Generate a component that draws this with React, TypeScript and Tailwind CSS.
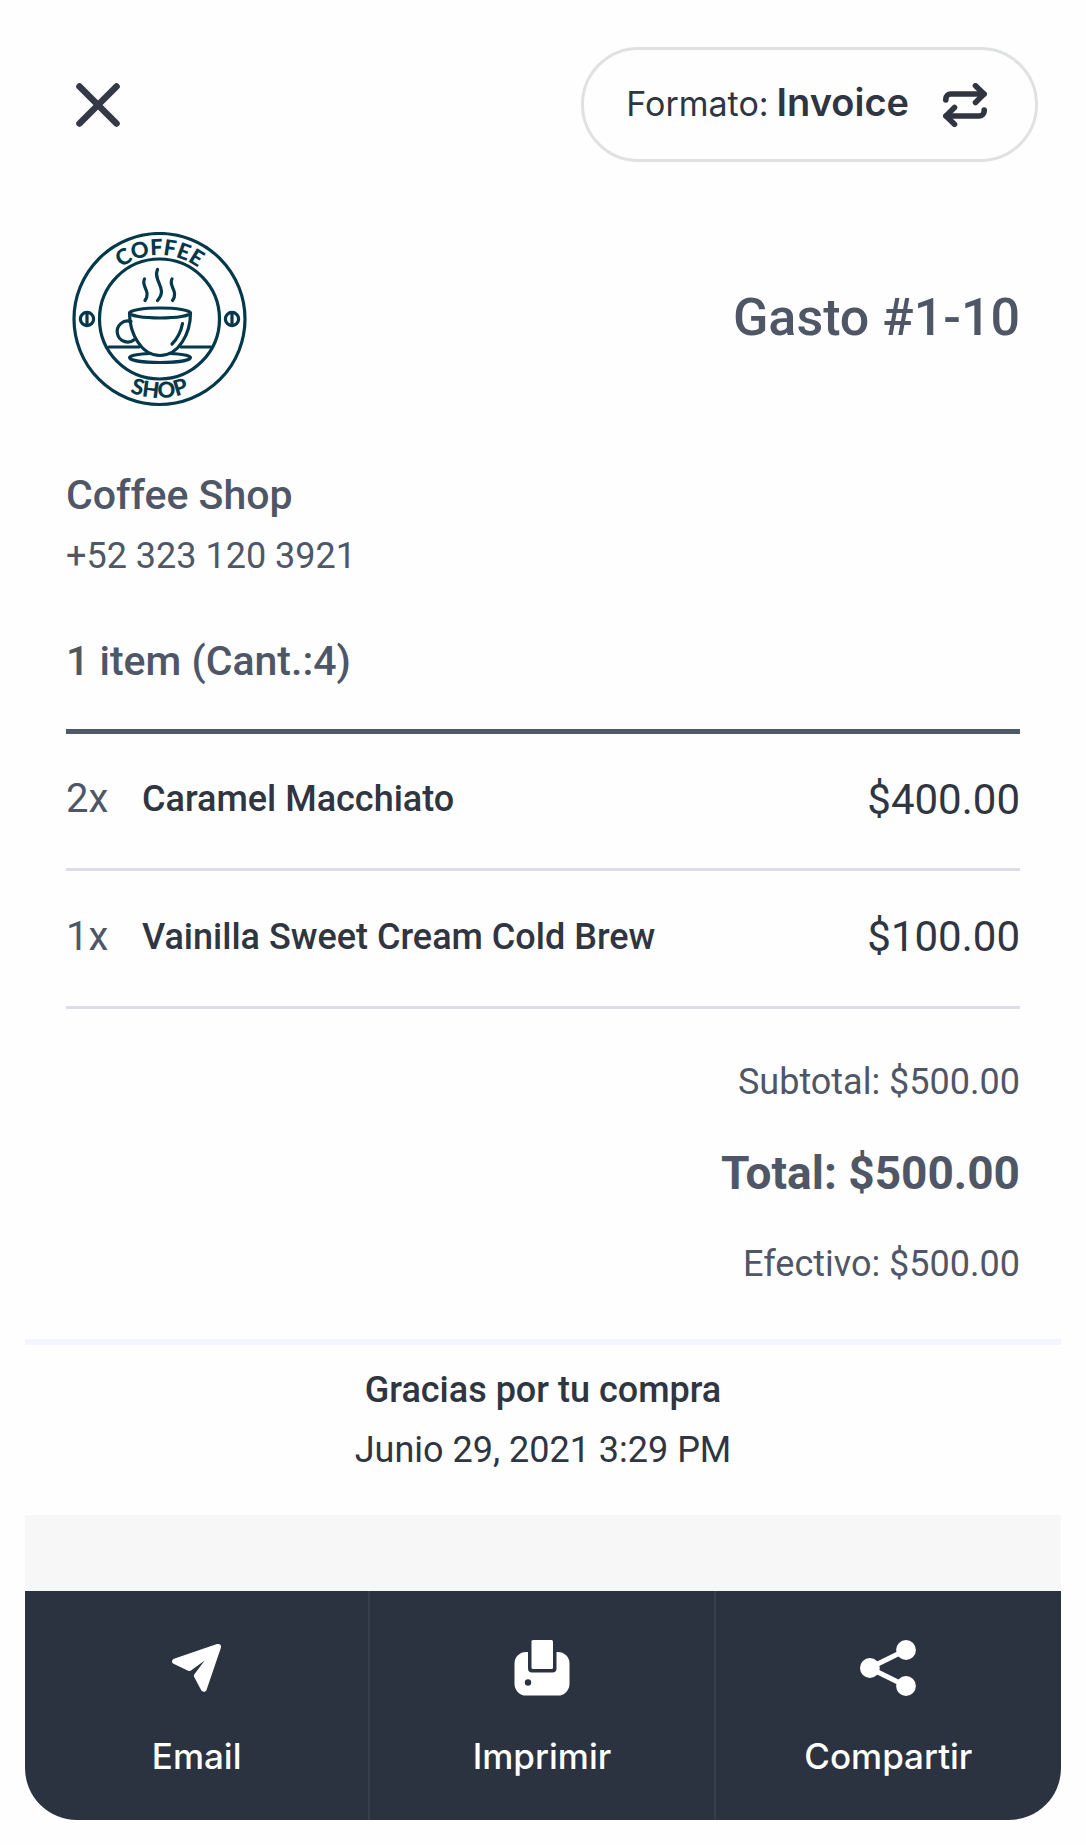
import type { ReactNode } from "react";

const items = [
  { qty: 2, name: "Caramel Macchiato", price: "$400.00" },
  { qty: 1, name: "Vainilla Sweet Cream Cold Brew", price: "$100.00" },
];

function CloseIcon() {
  return (
    <svg
      viewBox="0 0 44 44"
      className="w-11 h-11"
      fill="none"
      stroke="currentColor"
      strokeWidth="6.600"
      strokeLinecap="round"
      aria-hidden="true"
    >
      <path d="M3.500 3.500 40.500 40.500M40.500 3.500 3.500 40.500" />
    </svg>
  );
}

function SwapIcon() {
  return (
    <svg
      viewBox="0 0 44 44"
      className="w-11 h-11 shrink-0"
      fill="none"
      stroke="currentColor"
      strokeWidth="5.600"
      strokeLinecap="round"
      strokeLinejoin="round"
      aria-hidden="true"
    >
      <path d="M2.800 17V16a5 5 0 0 1 5-5H41" />
      <path d="m32.500 2.800 8.500 8.200-8.500 8.500" />
      <path d="M41.200 27V28a5 5 0 0 1-5 5H3" />
      <path d="m11.500 24.500-8.500 8.500 8.500 8.200" />
    </svg>
  );
}

function SendIcon() {
  return (
    <svg viewBox="0 0 56 56" className="w-14 h-14" fill="currentColor" aria-hidden="true">
      <path d="M5 18.800 48 4.100c2.700-.8 4.700 1 3.900 3.600L37.600 49.800c-.9 2.600-4.300 2.700-5.500.3L25.200 37c-.5-1-.4-1.900.2-2.700L35.700 20.600 22 30.400c-.9.7-1.900.8-2.900.3L4.500 23.800c-2-1-1.900-4.200.5-5Z" />
    </svg>
  );
}

function PrinterIcon() {
  return (
    <svg viewBox="0 0 56 56" className="w-14 h-14" fill="currentColor" aria-hidden="true">
      <path d="M12 12h2v16.500a4 4 0 0 0 4 4h20.500a4 4 0 0 0 4-4V12H44a11.500 11.500 0 0 1 11.500 11.500V44A11.500 11.500 0 0 1 44 55.500H12A11.500 11.500 0 0 1 .5 44V23.500A11.500 11.500 0 0 1 12 12Z" />
      <rect x="17.500" y="0" width="21.500" height="29" rx="1.500" />
      <circle cx="14" cy="42.500" r="3.200" fill="#2c3340" />
    </svg>
  );
}

function ShareIcon() {
  return (
    <svg viewBox="0 0 56 56" className="w-14 h-14" fill="currentColor" aria-hidden="true">
      <path d="M46 10 9.500 28 46 46" fill="none" stroke="currentColor" strokeWidth="5" />
      <circle cx="46" cy="10" r="9.900" />
      <circle cx="9.900" cy="28" r="9.900" />
      <circle cx="46" cy="46" r="9.900" />
    </svg>
  );
}

function Logo() {
  return (
    <svg
      viewBox="12 12 176 176"
      className="w-44 h-44"
      fill="none"
      stroke="#04384a"
      strokeWidth="3.200"
      strokeLinecap="round"
      role="img"
      aria-label="Coffee Shop"
    >
      <circle cx="99.500" cy="99" r="85.500" />
      <circle cx="99.500" cy="99" r="60" />

      {/* Beans */}
      <circle cx="27" cy="99" r="6.600" />
      <path d="M27 93v12" />
      <circle cx="172" cy="99" r="6.600" />
      <path d="M172 93v12" />

      {/* Steam */}
      <path d="M84.500 59c-4 7 7 12 .5 21.500" />
      <path d="M97.500 49.500c-5 11 11 19 0 31" />
      <path d="M112 59c-4 7 7 12 .5 21.500" />

      {/* Cup */}
      <ellipse cx="100" cy="93" rx="30.500" ry="5" />
      <path d="M69.500 93c0 20 11.500 42.500 30.500 42.500S130.500 113 130.500 93" />
      <path d="M71 101.500a10.500 10.500 0 1 0 3.500 18" />
      <path d="M122.500 103.500c-1.500 8-5 15-10.500 20.500" />

      {/* Table and plate */}
      <path d="M49 127h30M121 127h30" />
      <path d="M90 133.500c-12 .5-20.500 2-20.500 4 0 3 13.500 5 30.500 5s30.500-2 30.500-5c0-2-8.500-3.500-20.500-4" />

      <path id="logo-top" d="M35.500 99a64 64 0 0 1 128 0" stroke="none" />
      <path id="logo-bottom" d="M20.500 99a79 79 0 0 0 158 0" stroke="none" />
      <g fill="#04384a" stroke="none" textAnchor="middle" className="font-[Lato,sans-serif] font-black text-[22px]">
        <text>
          <textPath href="#logo-top" startOffset="50%">COFFEE</textPath>
        </text>
        <text>
          <textPath href="#logo-bottom" startOffset="50%">SHOP</textPath>
        </text>
      </g>
    </svg>
  );
}

function ActionButton({ icon, label }: { icon: ReactNode; label: string }) {
  return (
    <button
      type="button"
      className="flex flex-col items-center gap-[38px] pt-[49px] pb-[42px] font-[Inter,sans-serif] font-medium text-[35px] leading-[44px]"
    >
      {icon}
      <span>{label}</span>
    </button>
  );
}

export default function App() {
  return (
    <div className="bg-[#fefefe] font-[Roboto,sans-serif] text-[#2f3541] pt-[47px] pb-[26px]">
      {/* Header */}
      <header className="flex items-center justify-between pl-[76px] pr-12">
        <button type="button" aria-label="Cerrar" className="text-[#353846]">
          <CloseIcon />
        </button>
        <button
          type="button"
          className="flex items-center gap-[34px] h-[115px] pl-[42px] pr-12 rounded-full border-[3px] border-[#dfe1e3] font-[Inter,sans-serif]"
        >
          <span className="flex items-baseline gap-2 pb-1 leading-[48px]">
            <span className="text-[34px]">Formato:</span>
            <span className="text-[38px] font-semibold">Invoice</span>
          </span>
          <SwapIcon />
        </button>
      </header>

      <main className="mx-[25px]">
        <section className="px-[41px] pt-[70px] text-[#4f5767]">
          <div className="flex items-center justify-between pl-[6px]">
            <Logo />
            <h1 className="pb-1 text-[52px] leading-[64px] font-medium">Gasto #1-10</h1>
          </div>

          <h2 className="mt-[61px] text-[41px] leading-[52px] font-medium">Coffee Shop</h2>
          <p className="mt-[11px] text-[36px] leading-[48px]">+52 323 120 3921</p>
          <h2 className="mt-[55px] text-[41px] leading-[52px] font-medium">1 item (Cant.:4)</h2>

          {/* Items */}
          <table className="mt-[42px] w-full border-t-[5px] border-[#4f5a68]">
            <tbody>
              {items.map((item) => (
                <tr key={item.name} className="h-[138px] border-b-[3px] border-[#dcdde6]">
                  <td className="w-[76px] pb-1 text-[40px]">{item.qty}x</td>
                  <td className="pb-1 text-[36px] font-medium text-[#2f3541]">{item.name}</td>
                  <td className="pb-1 text-right text-[42px] text-[#2f3541]">{item.price}</td>
                </tr>
              ))}
            </tbody>
          </table>

          {/* Totals */}
          <div className="flex flex-col items-end gap-[39px] pt-[49px] pb-[51px] text-[36px] leading-[48px]">
            <p>Subtotal: $500.00</p>
            <p className="text-[46px] leading-[56px] font-bold">Total: $500.00</p>
            <p>Efectivo: $500.00</p>
          </div>
        </section>

        <section className="border-t-[6px] border-[#f5f6fd] pt-[21px] pb-[41px] text-center text-[36px] leading-[48px]">
          <p className="font-medium">Gracias por tu compra</p>
          <p className="mt-3">Junio 29, 2021 3:29 PM</p>
        </section>

        <div className="h-[76px] bg-[#f7f7f7]" />

        {/* Actions */}
        <footer className="grid grid-cols-3 divide-x-2 divide-[#35404c] rounded-b-[52px] bg-[#2c3340] text-white">
          <ActionButton icon={<SendIcon />} label="Email" />
          <ActionButton icon={<PrinterIcon />} label="Imprimir" />
          <ActionButton icon={<ShareIcon />} label="Compartir" />
        </footer>
      </main>
    </div>
  );
}
